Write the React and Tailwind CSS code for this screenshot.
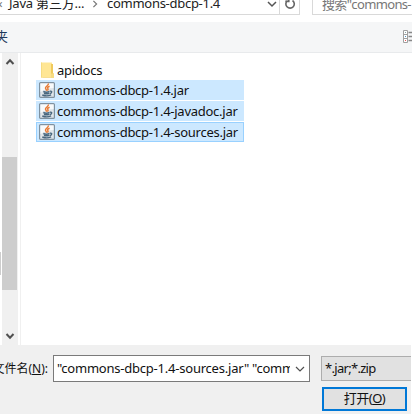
const files = [
  { name: 'commons-dbcp-1.4.jar', focused: false },
  { name: 'commons-dbcp-1.4-javadoc.jar', focused: false },
  { name: 'commons-dbcp-1.4-sources.jar', focused: true },
];

function FolderIcon() {
  return (
    <svg width="16" height="18" viewBox="0 0 16 18" className="shrink-0">
      <path d="M1 1.5h11v15H1z" fill="#ffe694" />
      <path d="M1 1.5h1v15H1z" fill="#f6db82" />
      <path d="M11 3h2v9.5h1V17H3l-2-.5h10z" fill="#f0ca5c" />
      <path d="M11 12.5h3V17h-3z" fill="#f7dc82" />
    </svg>
  );
}

function JarIcon() {
  return (
    <svg width="16" height="16" viewBox="0 0 16 16" className="shrink-0">
      <rect x="0.6" y="0.6" width="14.8" height="14.8" rx="1" fill="#dfe5ea" stroke="#7f919f" strokeWidth="1.2" />
      <path d="M1.5 1.5h13V6Q8 6 1.5 10z" fill="#f8fafb" />
      <path d="M9.3 1.5c.8 2-3.2 2.8-2.8 4.7.1.8 1.2 1.5.9 2.5M10.6 4.2C8.5 5 8.3 5.8 8.9 6.7c.4.7.1 1.3-.5 1.8" fill="none" stroke="#e87b35" strokeWidth="1.5" />
      <path d="M4.3 9.500c1.5.7 4.6.7 6.3 0M5 11.300c1.5.6 3.7.6 5.2 0M3.300 13c2.500 1 6.500.9 8.800-.2M11 9.200c2.400-.5 2.300 1.800-.3 2.400" fill="none" stroke="#49677e" strokeWidth="1.4" />
    </svg>
  );
}

function Chevron({ d, size = 10, color = '#505050', weight = 1.5 }) {
  return (
    <svg width={size} height={size} viewBox="0 0 10 10" className="shrink-0">
      <path d={d} fill="none" stroke={color} strokeWidth={weight} />
    </svg>
  );
}

function AddressBar() {
  return (
    <div className="flex h-[22px] items-start text-[#222]">
      <div className="flex h-[15px] w-[300px] items-start overflow-hidden border-r border-b border-[#d9d9d9]">
        <div className="-mt-[6px] flex h-[20px] w-[279px] shrink-0 items-center text-[13px] whitespace-nowrap">
          <span className="mr-1 -ml-1 w-[9px] shrink-0 text-[#777]">«</span>
          <span className="w-[82px] shrink-0 tracking-[-0.2px]">Java 第三方...</span>
          <Chevron d="M3 1l4 4-4 4" size={8} color="#777" />
          <span className="ml-[8px] w-[160px] shrink-0 tracking-[-0.28px]">commons-dbcp-1.4</span>
          <Chevron d="M1 3l4 4 4-4" color="#555" />
        </div>
        <div className="flex h-[14px] flex-1 justify-center border-l border-[#d9d9d9]">
          <svg width="12" height="12" viewBox="0 0 12 12" className="-mt-[2px]">
            <path d="M3.500 2.600A4.200 4.200 0 1 0 8.500 2.500M4.800 0v3.400H1.300" fill="none" stroke="#666" strokeWidth="1.600" />
          </svg>
        </div>
      </div>
      <div className="ml-[12px] h-[15px] flex-1 overflow-hidden border-b border-l border-[#d9d9d9] pl-[9px]">
        <div className="-mt-[6px] h-[20px] text-[13px] leading-[20px] tracking-[-0.65px] whitespace-nowrap text-[#777]">搜索"commons-</div>
      </div>
    </div>
  );
}

function Toolbar() {
  return (
    <div className="flex h-[31px] items-center overflow-hidden border-b border-[#e8eaec] bg-[#f5f6f7]">
      <span className="-ml-[5px] w-[408px] shrink-0 text-[13px] text-[#1e395b]">夹</span>
      <svg width="10" height="14" viewBox="0 0 10 14" className="-mt-[1px] shrink-0">
        <path d="M.5.500h4v12h-4zM.5 4.500h4M.5 8.500h4" fill="#fff" stroke="#a0a0a0" />
        <path d="M2 2h1v1H2z" fill="#8aa" />
        <path d="M2 6h1v1H2z" fill="#4994c7" />
        <path d="M2 10h1v1H2z" fill="#e55" />
        <path d="M5.500 2.500H10M5.500 6.500H10M5.500 10.500H10" stroke="#888" strokeWidth="1.500" />
      </svg>
    </div>
  );
}

function Scrollbar() {
  return (
    <div className="flex h-full w-[18px] flex-none">
      <div className="flex w-[2px] flex-col">
        <div className="mt-[199px] h-[23px] w-px bg-[#cdcdcd]" />
      </div>
      <div className="flex w-[16px] flex-col items-center bg-[#f0f0f0]">
        <div className="flex h-[104px] pt-[4px]"><Chevron d="M1.500 7L5 3.300 8.500 7" weight={2} /></div>
        <div className="h-[133px] w-[15px] self-start bg-[#cdcdcd]" />
        <div className="flex flex-1 items-end pb-[4px]"><Chevron d="M1.500 3L5 6.700 8.500 3" weight={2} /></div>
      </div>
    </div>
  );
}

function FileList() {
  return (
    <div className="ml-[2px] flex flex-1 flex-col border-l border-[#f0f0f0] pt-[7px] pl-[15px] text-[13px] tracking-[-0.26px] text-[#111]">
      <div className="flex h-[20px] items-center pl-[4px]">
        <FolderIcon />
        <span className="ml-[1px] pt-px">apidocs</span>
      </div>
      <div className="flex flex-col gap-px">
        {files.map((file) => (
          <div
            key={file.name}
            className={`flex h-[20px] w-[208px] items-center border bg-[#cce8ff] pl-[2px] whitespace-nowrap ${file.focused ? 'border-[#99d1ff]' : 'border-[#cce8ff]'}`}
          >
            <JarIcon />
            <span className="ml-[2px] pt-[2px]">{file.name}</span>
          </div>
        ))}
      </div>
    </div>
  );
}

function Footer() {
  return (
    <div className="flex h-[69px] w-[411px] flex-col overflow-hidden bg-[#f0f0f0] pt-[10px] text-[13px] text-[#111]">
      <div className="flex h-[27px] items-center">
        <div className="flex w-[53px] shrink-0 justify-end pr-[5px] text-[12px] whitespace-nowrap">
          文件名(<span className="underline">N</span>):
        </div>
        <div className="flex h-[27px] w-[257px] shrink-0 items-center border border-[#7a7a7a] bg-white pr-[3px] pl-[3px]">
          <div className="w-[233px] shrink-0 overflow-hidden pt-px tracking-[-0.22px] whitespace-nowrap">"commons-dbcp-1.4-sources.jar" "commons</div>
          <div className="ml-[5px] flex"><Chevron d="M1 3l4 4 4-4" weight={1.2} /></div>
        </div>
        <div className="ml-[11px] flex h-[25px] flex-1 items-center border border-r-0 border-[#adadad] bg-[#e1e1e1] pl-[3px] tracking-[-0.7px]">*.jar;*.zip</div>
      </div>
      <div className="mt-[5px] ml-[322px] flex h-[24px] w-[85px] items-center justify-center border-2 border-[#0078d7] bg-[#e1e1e1] tracking-[-0.5px]">
        打开(<span className="underline">O</span>)
      </div>
    </div>
  );
}

export default function App() {
  return (
    <div className="flex h-[414px] w-[412px] flex-col overflow-hidden bg-white font-['Noto_Sans','Noto_Sans_CJK_SC',sans-serif]">
      <AddressBar />
      <Toolbar />
      <div className="flex h-[292px]">
        <Scrollbar />
        <FileList />
      </div>
      <Footer />
    </div>
  );
}
